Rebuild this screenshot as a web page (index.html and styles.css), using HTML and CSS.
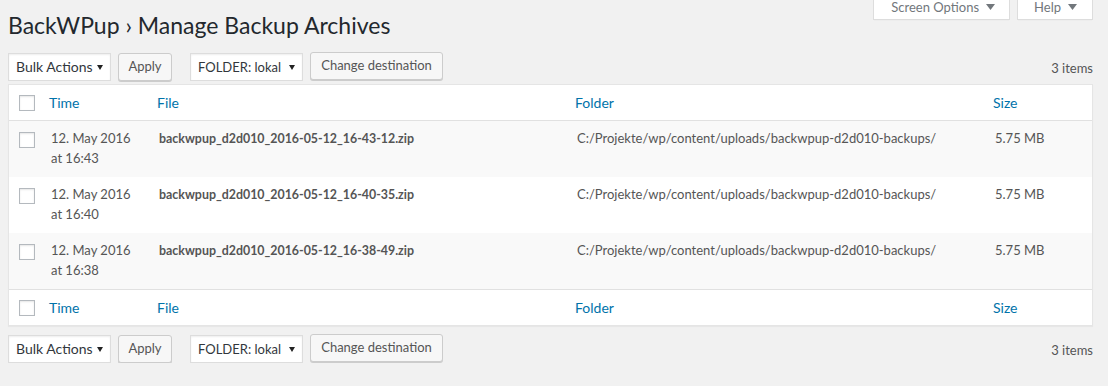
FILE: index.html
```html
<!DOCTYPE html>
<html lang="en">
<head>
<meta charset="utf-8">
<title>BackWPup › Manage Backup Archives</title>
<link rel="stylesheet" href="styles.css">
</head>
<body>
<div class="wrap">
  <div class="header">
    <h1 class="title">BackWPup › Manage Backup Archives</h1>
    <div class="screen-meta">
      <div class="meta-btn meta-screen">Screen Options <svg class="meta-arrow" width="9" height="6" viewBox="0 0 9 6"><polygon points="0,0 9,0 4.5,6" fill="#72777c"/></svg></div>
      <div class="meta-btn meta-help">Help <svg class="meta-arrow" width="9" height="6" viewBox="0 0 9 6"><polygon points="0,0 9,0 4.5,6" fill="#72777c"/></svg></div>
    </div>
  </div>

  <div class="tablenav tablenav-top">
    <div class="select sel-bulk"><span>Bulk Actions</span><svg class="sel-arrow" width="6" height="5" viewBox="0 0 6 5"><polygon points="0,0 6,0 3,5" fill="#222"/></svg></div>
    <div class="button btn-apply">Apply</div>
    <div class="select sel-folder"><span>FOLDER: lokal</span><svg class="sel-arrow" width="6" height="5" viewBox="0 0 6 5"><polygon points="0,0 6,0 3,5" fill="#222"/></svg></div>
    <div class="button btn-change">Change destination</div>
    <div class="items">3 items</div>
  </div>

  <table class="widefat">
    <colgroup>
      <col class="c-check"><col class="c-time"><col class="c-file"><col class="c-folder"><col class="c-size">
    </colgroup>
    <thead>
      <tr>
        <th class="check"><span class="cb"></span></th>
        <th class="sortable"><a>Time</a></th>
        <th class="sortable"><a>File</a></th>
        <th class="sortable"><a>Folder</a></th>
        <th class="sortable"><a>Size</a></th>
      </tr>
    </thead>
    <tbody>
      <tr class="alt">
        <td class="check"><span class="cb"></span></td>
        <td>12. May 2016<br>at 16:43</td>
        <td class="fname">backwpup_d2d010_2016-05-12_16-43-12.zip</td>
        <td>C:/Projekte/wp/content/uploads/backwpup-d2d010-backups/</td>
        <td>5.75 MB</td>
      </tr>
      <tr>
        <td class="check"><span class="cb"></span></td>
        <td>12. May 2016<br>at 16:40</td>
        <td class="fname">backwpup_d2d010_2016-05-12_16-40-35.zip</td>
        <td>C:/Projekte/wp/content/uploads/backwpup-d2d010-backups/</td>
        <td>5.75 MB</td>
      </tr>
      <tr class="alt">
        <td class="check"><span class="cb"></span></td>
        <td>12. May 2016<br>at 16:38</td>
        <td class="fname">backwpup_d2d010_2016-05-12_16-38-49.zip</td>
        <td>C:/Projekte/wp/content/uploads/backwpup-d2d010-backups/</td>
        <td>5.75 MB</td>
      </tr>
    </tbody>
    <tfoot>
      <tr>
        <th class="check"><span class="cb"></span></th>
        <th class="sortable"><a>Time</a></th>
        <th class="sortable"><a>File</a></th>
        <th class="sortable"><a>Folder</a></th>
        <th class="sortable"><a>Size</a></th>
      </tr>
    </tfoot>
  </table>

  <div class="tablenav tablenav-bottom">
    <div class="select sel-bulk"><span>Bulk Actions</span><svg class="sel-arrow" width="6" height="5" viewBox="0 0 6 5"><polygon points="0,0 6,0 3,5" fill="#222"/></svg></div>
    <div class="button btn-apply">Apply</div>
    <div class="select sel-folder"><span>FOLDER: lokal</span><svg class="sel-arrow" width="6" height="5" viewBox="0 0 6 5"><polygon points="0,0 6,0 3,5" fill="#222"/></svg></div>
    <div class="button btn-change">Change destination</div>
    <div class="items">3 items</div>
  </div>
</div>
</body>
</html>
```

FILE: styles.css
```css
* { box-sizing: border-box; }
html, body { margin: 0; padding: 0; }
body {
  background: #f1f1f1;
  color: #444;
  font-family: Lato, "Open Sans", sans-serif;
  font-size: 13px;
  line-height: 1.4;
  overflow: hidden;
}
.wrap { padding: 0 15px 0 8px; }

/* header */
.header {
  display: flex;
  justify-content: space-between;
  align-items: flex-start;
}
.title {
  margin: 0;
  padding: 11px 0 4px;
  font-size: 23px;
  font-weight: 400;
  line-height: 29px;
  color: #23282d;
}
.screen-meta {
  display: flex;
  gap: 7px;
  margin-top: -6px;
  flex-shrink: 0;
}
.meta-btn {
  height: 26px;
  display: flex;
  align-items: center;
  gap: 7px;
  padding: 0 14px 0 16px;
  background: #fff;
  border: 1px solid #ddd;
  border-top: 0;
  box-shadow: 0 1px 1px -1px rgba(0,0,0,.1);
  color: #72777c;
  font-size: 13px;
  line-height: 16px;
  white-space: nowrap;
  flex-shrink: 0;
}
.meta-screen { padding-left: 17px; padding-right: 14px; }
.meta-help { padding-right: 15px; }
.meta-arrow { display: block; margin-top: 1px; }

/* tablenav */
.tablenav {
  display: flex;
  align-items: flex-start;
  height: 28px;
}
.tablenav-top { margin: 9px 0 3px; }
.tablenav-bottom { margin-top: 9px; }
.select {
  height: 28px;
  display: flex;
  align-items: center;
  justify-content: space-between;
  padding: 0 7px 0 7px;
  background: #fff;
  border: 1px solid #ddd;
  box-shadow: inset 0 1px 2px rgba(0,0,0,.07);
  color: #32373c;
  font-size: 14px;
  white-space: nowrap;
}
.sel-arrow { display: block; margin-top: 1px; flex-shrink: 0; }
.sel-bulk { width: 103px; margin-right: 7px; }
.sel-folder { width: 113px; margin-right: 7px; font-size: 13px; }
.button {
  height: 28px;
  display: flex;
  align-items: center;
  justify-content: center;
  background: #f7f7f7;
  border: 1px solid #ccc;
  border-radius: 3px;
  box-shadow: 0 1px 0 #ccc;
  color: #555;
  font-size: 13px;
  padding-bottom: 1px;
  white-space: nowrap;
}
.btn-apply { width: 54px; margin-right: 18px; }
.btn-change { width: 133px; margin-top: -1px; }
.items {
  margin-left: auto;
  padding-top: 6px;
  color: #555;
  font-size: 13px;
  line-height: 18px;
}

/* table */
.widefat {
  width: 1085px;
  table-layout: fixed;
  border-collapse: separate;
  border-spacing: 0;
  background: #fff;
  border: 1px solid #e5e5e5;
  box-shadow: 0 1px 1px rgba(0,0,0,.04);
}
.c-check { width: 32px; }
.c-time { width: 108px; }
.c-file { width: 418px; }
.c-folder { width: 418px; }
.c-size { width: 107px; }

.widefat th {
  height: 36px;
  padding: 0 8px;
  text-align: left;
  font-weight: 400;
  font-size: 14px;
  line-height: 20px;
  vertical-align: middle;
}
.widefat thead th { border-bottom: 1px solid #e1e1e1; }
.widefat tfoot th { border-top: 1px solid #e1e1e1; }
.widefat th a { color: #0073aa; }
.widefat th.check { padding: 0 0 0 10px; }

.widefat td {
  height: 56px;
  padding: 8px 10px;
  vertical-align: top;
  color: #555;
  font-size: 13px;
  line-height: 19.5px;
}
.widefat td.check { padding: 11px 0 0 10px; }
.widefat tr.alt td { background: #f9f9f9; }
.widefat td.fname {
  font-weight: 700;
  font-size: 12.4px;
  white-space: nowrap;
}

.cb {
  display: block;
  width: 16px;
  height: 16px;
  border: 1px solid #b4b9be;
  background: #fff;
  box-shadow: inset 0 1px 2px rgba(0,0,0,.1);
}
```
